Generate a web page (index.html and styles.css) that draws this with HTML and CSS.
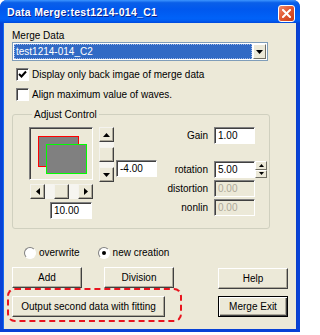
FILE: index.html
```html
<!DOCTYPE html>
<html lang="en">
<head>
    <meta charset="UTF-8">
    <title>Data Merge</title>
    <link rel="stylesheet" href="styles.css">
</head>
<body>
    <div class="window">
        <div class="titlebar">
            <span class="title">Data Merge:test1214-014_C1</span>
            <span class="close-btn">
                <svg width="9" height="9" viewBox="0 0 9 9"><path d="M1 1 L8 8 M8 1 L1 8" stroke="#fff" stroke-width="2" stroke-linecap="square"/></svg>
            </span>
        </div>

        <div class="client">
            <div class="label">Merge Data</div>
            <div class="combo">
                <span class="combo-value">test1214-014_C2</span>
                <span class="combo-btn">
                    <svg width="7" height="4" viewBox="0 0 7 4"><path d="M0 0 H7 L3.5 4 Z" fill="#000"/></svg>
                </span>
            </div>

            <div class="check">
                <span class="box">
                    <svg width="9" height="9" viewBox="0 0 9 9"><path d="M1 4 L3.5 6.5 L8 1.5" stroke="#000" stroke-width="2" fill="none"/></svg>
                </span>
                Display only back imgae of merge data
            </div>
            <div class="check">
                <span class="box"></span>
                Align maximum value of waves.
            </div>

            <fieldset class="group">
                <legend>Adjust Control</legend>
                <div class="group-body">
                    <div class="left-col">
                        <div class="preview-row">
                            <div class="preview">
                                <div class="rect rect-red"></div>
                                <div class="rect rect-green"></div>
                            </div>
                            <div class="vscroll">
                                <span class="sb-btn">
                                    <svg width="7" height="4" viewBox="0 0 7 4"><path d="M3.5 0 L7 4 H0 Z" fill="#000"/></svg>
                                </span>
                                <span class="sb-track v-track"><span class="sb-thumb"></span></span>
                                <span class="sb-btn">
                                    <svg width="7" height="4" viewBox="0 0 7 4"><path d="M0 0 H7 L3.5 4 Z" fill="#000"/></svg>
                                </span>
                            </div>
                            <div class="edit edit-offset">-4.00</div>
                        </div>
                        <div class="hscroll">
                            <span class="sb-btn">
                                <svg width="4" height="7" viewBox="0 0 4 7"><path d="M0 3.5 L4 0 V7 Z" fill="#000"/></svg>
                            </span>
                            <span class="sb-track h-track"><span class="sb-thumb"></span></span>
                            <span class="sb-btn">
                                <svg width="4" height="7" viewBox="0 0 4 7"><path d="M0 0 L4 3.5 L0 7 Z" fill="#000"/></svg>
                            </span>
                        </div>
                        <div class="edit edit-scale">10.00</div>
                    </div>

                    <div class="params">
                        <div class="param param-gain">
                            <span class="param-label">Gain</span>
                            <span class="edit">1.00</span>
                        </div>
                        <div class="param param-rotation">
                            <span class="param-label">rotation</span>
                            <span class="edit">5.00</span>
                            <span class="spin">
                                <span class="spin-half">
                                    <svg width="5" height="3" viewBox="0 0 5 3"><path d="M2.5 0 L5 3 H0 Z" fill="#000"/></svg>
                                </span>
                                <span class="spin-half">
                                    <svg width="5" height="3" viewBox="0 0 5 3"><path d="M0 0 H5 L2.5 3 Z" fill="#000"/></svg>
                                </span>
                            </span>
                        </div>
                        <div class="param">
                            <span class="param-label">distortion</span>
                            <span class="edit disabled">0.00</span>
                        </div>
                        <div class="param">
                            <span class="param-label">nonlin</span>
                            <span class="edit disabled">0.00</span>
                        </div>
                    </div>
                </div>
            </fieldset>

            <div class="radios">
                <span class="radio"><span class="dot"></span>overwrite</span>
                <span class="radio radio-new"><span class="dot checked"></span>new creation</span>
            </div>

            <div class="button-row">
                <span class="btn">Add</span>
                <span class="btn btn-division">Division</span>
                <span class="btn btn-help">Help</span>
            </div>
            <div class="button-row row-bottom">
                <span class="btn btn-output">Output second data with fitting</span>
                <span class="btn btn-default">Merge Exit</span>
            </div>

            <!-- annotation around the fitting button -->
            <div class="highlight"></div>
        </div>
    </div>
</body>
</html>
```

FILE: styles.css
```css
/* Windows XP style dialog */
body {
    margin: 0;
    background-color: #ffffff;
    font-family: 'Liberation Sans', Arial, sans-serif;
    font-size: 10px;
    color: #000000;
}

.window {
    width: 300px;
    height: 332px;
    box-sizing: border-box;
    border: 3px solid #0842d6;
    border-top: none;
    border-radius: 7px 7px 0 0;
    background-color: #ece9d8;
    box-shadow: inset 1px 0 0 #166aee, inset -1px 0 0 #0a3ec8;
    display: flex;
    flex-direction: column;
}

.titlebar {
    height: 23px;
    margin: 0 -3px;
    border-radius: 7px 7px 0 0;
    background: linear-gradient(#3d95ff 0%, #0a5fe8 12%, #0058ee 40%, #0062f8 80%, #005cf2 90%, #0048dc 100%);
    display: flex;
    align-items: center;
    padding: 0 5px 0 7px;
}

.title {
    flex: 1;
    color: #ffffff;
    font-weight: bold;
    font-size: 10.5px;
    letter-spacing: 0.3px;
    text-shadow: 1px 1px 0 #0a1e8a;
}

.close-btn {
    width: 15px;
    height: 15px;
    border: 1px solid #ffffff;
    border-radius: 3px;
    background: linear-gradient(135deg, #f08a6c 0%, #e25a34 45%, #c83c16 100%);
    display: flex;
    align-items: center;
    justify-content: center;
    margin-top: 4px;
}

.client {
    position: relative;
    flex: 1;
    padding: 6px 0 0 9px;
}

.label {
    line-height: 13px;
}

.combo {
    width: 256px;
    height: 19px;
    box-sizing: border-box;
    border: 1px solid #7f9db9;
    background-color: #ffffff;
    display: flex;
    align-items: center;
    padding: 1px;
}

.combo-value {
    flex: 1;
    height: 15px;
    line-height: 15px;
    background-color: #316ac5;
    color: #ffffff;
    padding-left: 2px;
    outline: 1px dotted #9fb8e6;
    outline-offset: -1px;
}

.combo-btn {
    width: 13px;
    height: 15px;
    margin-left: 1px;
    box-sizing: border-box;
    background-color: #ece9d8;
    border: 1px solid;
    border-color: #ffffff #716f64 #716f64 #ffffff;
    display: flex;
    align-items: center;
    justify-content: center;
}

.check {
    display: flex;
    align-items: center;
    height: 13px;
    margin: 7px 0 0 4px;
}

.box {
    width: 13px;
    height: 13px;
    box-sizing: border-box;
    border: 1px solid;
    border-color: #808080 #ffffff #ffffff #808080;
    box-shadow: inset 1px 1px 0 #404040;
    background-color: #ffffff;
    margin-right: 3px;
    display: flex;
    align-items: center;
    justify-content: center;
}

.group {
    width: 258px;
    box-sizing: border-box;
    margin: 7px 0 0 0;
    padding: 6px 0 9px 16px;
    border: 1px solid #d0d0bf;
    border-radius: 3px;
}

.group legend {
    line-height: 13px;
    padding: 0 2px;
    margin-left: 3px;
}

.group-body {
    display: flex;
}

.preview-row {
    display: flex;
    align-items: flex-start;
}

.preview {
    position: relative;
    width: 64px;
    height: 53px;
    box-sizing: border-box;
    border: 1px solid;
    border-color: #808080 #ffffff #ffffff #808080;
    box-shadow: inset 1px 1px 0 #404040;
}

/* rectangles are drawn at their place on the preview canvas */
.rect {
    position: absolute;
    width: 41px;
    box-sizing: border-box;
    background-color: #808080;
}

.rect-red {
    left: 8px;
    top: 8px;
    height: 31px;
    border: 1px solid #ff0000;
}

.rect-green {
    left: 16px;
    top: 16px;
    height: 30px;
    border: 1px solid #00ff00;
}

.sb-btn {
    width: 15px;
    height: 15px;
    box-sizing: border-box;
    background-color: #ece9d8;
    border: 1px solid;
    border-color: #f4f3ee #404040 #404040 #f4f3ee;
    box-shadow: inset -1px -1px 0 #aca899;
    display: flex;
    align-items: center;
    justify-content: center;
    flex: none;
}

.sb-track {
    flex: 1;
    display: flex;
    background-color: #f6f5f0;
}

.sb-thumb {
    box-sizing: border-box;
    background-color: #ece9d8;
    border: 1px solid;
    border-color: #f4f3ee #404040 #404040 #f4f3ee;
    box-shadow: inset -1px -1px 0 #aca899;
}

.vscroll {
    width: 15px;
    height: 55px;
    margin-left: 6px;
    display: flex;
    flex-direction: column;
}

.v-track {
    flex-direction: column;
    padding-top: 5px;
}

.v-track .sb-thumb {
    height: 15px;
}

.hscroll {
    width: 63px;
    height: 15px;
    margin: 2px 0 0 1px;
    display: flex;
}

.h-track {
    padding-left: 9px;
}

.h-track .sb-thumb {
    width: 15px;
}

.edit {
    width: 41px;
    height: 17px;
    box-sizing: border-box;
    border: 1px solid;
    border-color: #808080 #ffffff #ffffff #808080;
    box-shadow: inset 1px 1px 0 #404040;
    background-color: #ffffff;
    line-height: 15px;
    padding-left: 3px;
    display: block;
}

.edit-offset {
    margin: 33px 0 0 2px;
}

.edit-scale {
    width: 42px;
    margin: 3px 0 0 21px;
}

.edit.disabled {
    background-color: #ece9d8;
    color: #aca899;
}

.param {
    display: flex;
    align-items: center;
    margin-top: 2px;
}

.param-gain {
    margin-top: 0;
}

.param-rotation {
    margin-top: 17px;
}

.param-label {
    width: 51px;
    text-align: right;
    margin-right: 6px;
}

.spin {
    width: 12px;
    height: 17px;
    display: flex;
    flex-direction: column;
}

.spin-half {
    flex: 1;
    box-sizing: border-box;
    background-color: #ece9d8;
    border: 1px solid;
    border-color: #ffffff #716f64 #716f64 #ffffff;
    display: flex;
    align-items: center;
    justify-content: center;
}

.radios {
    display: flex;
    align-items: center;
    height: 13px;
    margin: 17px 0 0 12px;
}

.radio {
    display: flex;
    align-items: center;
}

.radio-new {
    margin-left: 18px;
}

.dot {
    width: 12px;
    height: 12px;
    box-sizing: border-box;
    border-radius: 50%;
    border: 1px solid;
    border-color: #808080 #ffffff #ffffff #808080;
    background-color: #ffffff;
    margin-right: 3px;
    position: relative;
}

.dot.checked::after {
    content: '';
    position: absolute;
    left: 3px;
    top: 3px;
    width: 4px;
    height: 4px;
    border-radius: 50%;
    background-color: #000000;
}

.button-row {
    display: flex;
    align-items: flex-start;
    margin-top: 8px;
}

.row-bottom {
    margin-top: 7px;
}

.btn {
    width: 70px;
    height: 21px;
    box-sizing: border-box;
    background-color: #ece9d8;
    border: 1px solid;
    border-color: #ffffff #404040 #404040 #ffffff;
    box-shadow: inset -1px -1px 0 #aca899;
    display: flex;
    align-items: center;
    justify-content: center;
}

.btn-division {
    margin-left: 22px;
}

.btn-help {
    margin: 1px 0 0 44px;
}

.btn-output {
    width: 153px;
}

.btn-default {
    margin-left: 53px;
    border: 1px solid #000000;
    box-shadow: inset 1px 1px 0 #ffffff, inset -1px -1px 0 #404040, inset -2px -2px 0 #aca899;
}

.highlight {
    position: absolute;
    left: 4px;
    top: 265px;
    width: 175px;
    height: 34px;
    box-sizing: border-box;
    border: 2px dashed #e8141e;
    border-radius: 8px;
}
```
